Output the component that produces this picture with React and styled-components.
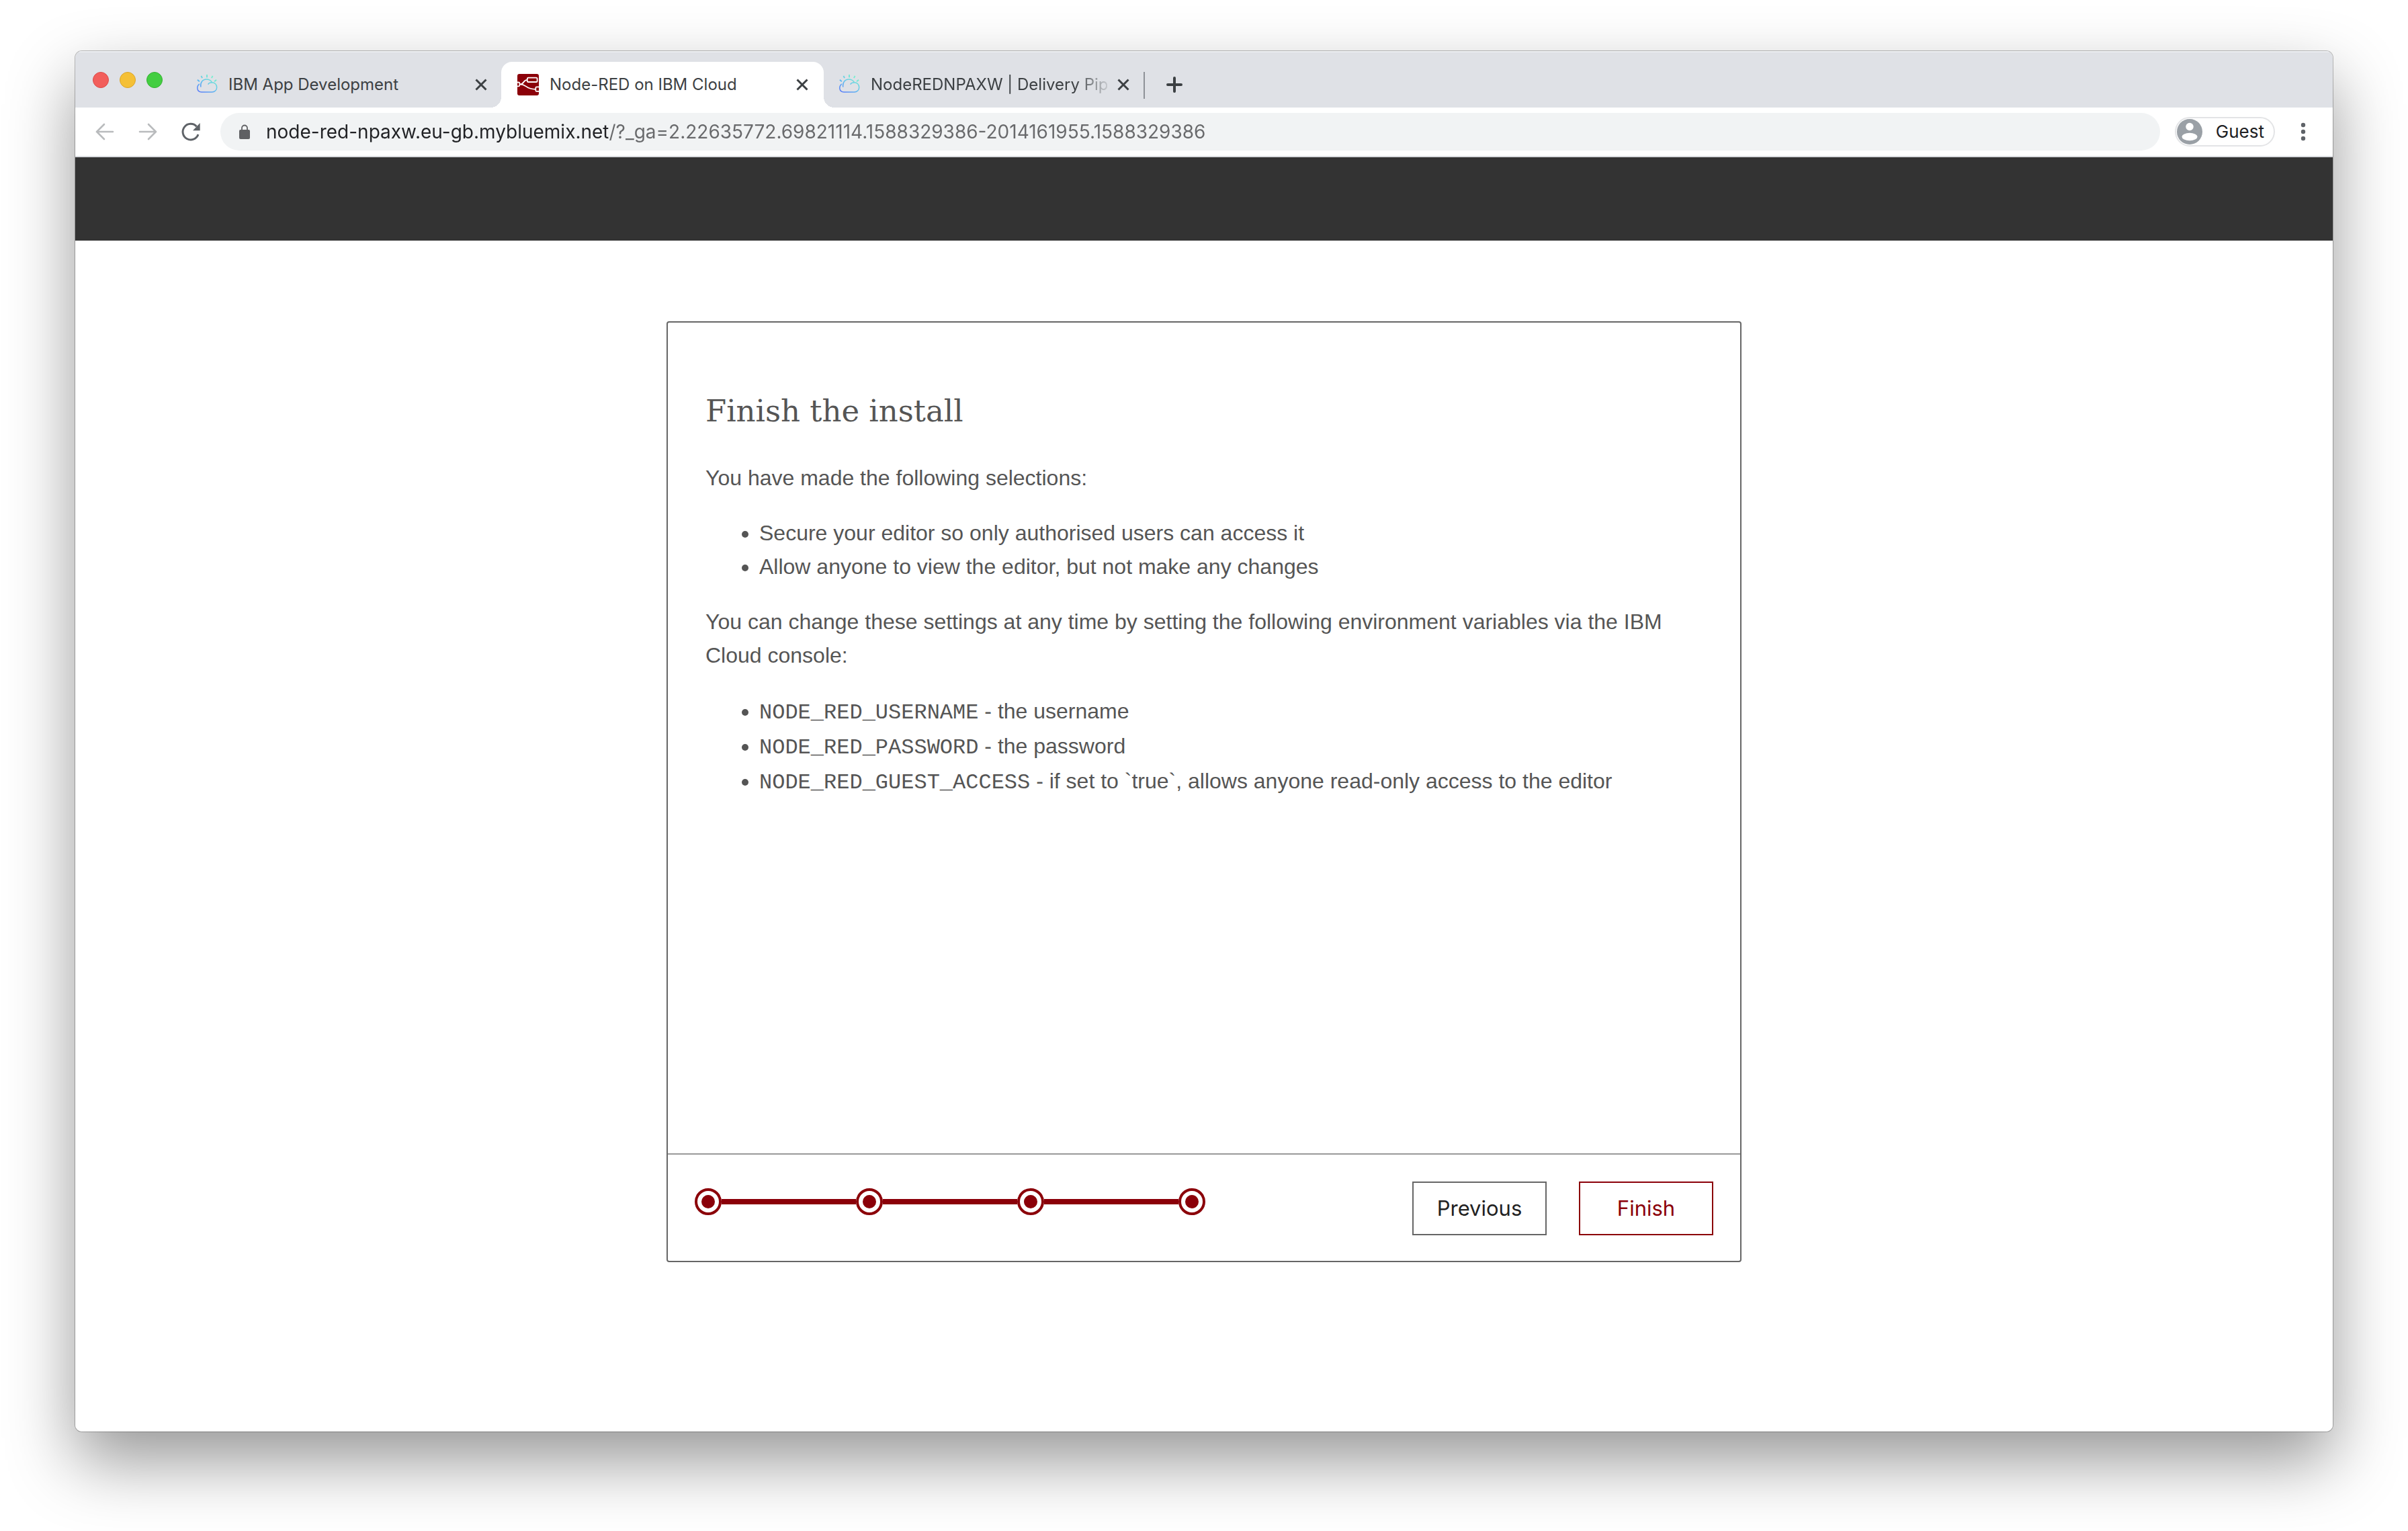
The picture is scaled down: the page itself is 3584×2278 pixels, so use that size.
import React from "react";
import styled, { createGlobalStyle, css } from "styled-components";

const sans = '"Inter", "Roboto", sans-serif';
const body = '"Liberation Sans", Arial, sans-serif';
const mono = '"Liberation Mono", "Courier New", monospace';
const slab = '"DejaVu Serif", serif';
const red = "#8b0009";

const GlobalStyle = createGlobalStyle`
  *, *::before, *::after { box-sizing: border-box; }
  body { margin: 0; background: #fff; }
  button, input { font: inherit; color: inherit; margin: 0; padding: 0; border: 0; background: none; }
  h1, p, ul, ol { margin: 0; padding: 0; }
`;

const Desktop = styled.div`
  display: flex;
  min-height: 100vh;
  padding: 76px 112px 148px;
`;

const Window = styled.div`
  flex: 1;
  min-width: 0;
  display: flex;
  flex-direction: column;
  overflow: hidden;
  border-radius: 10px;
  background: #fff;
  font-family: ${sans};
  box-shadow: 0 0 0 1px rgba(0, 0, 0, 0.25), 0 44px 100px rgba(0, 0, 0, 0.41);
`;

const TabStrip = styled.header`
  display: flex;
  height: 84px;
  padding: 16px 24px 0 26px;
  background: #dfe1e6;
  box-shadow: inset 0 2px 0 #eceef1;
`;

const Lights = styled.div`
  display: flex;
  gap: 16px;
  width: 130px;
  padding-top: 15px;
`;

const Light = styled.button`
  width: 24px;
  height: 24px;
  border-radius: 50%;
  background: ${(p) => p.$fill};
  border: 1px solid ${(p) => p.$edge};
`;

const TabList = styled.div`
  display: flex;
`;

const Tab = styled.div`
  position: relative;
  display: flex;
  align-items: center;
  width: 478px;
  padding: 0 14px 0 24px;
  font-size: 24px;
  line-height: 32px;
  color: #3c4043;
  ${(p) =>
    p.$active &&
    css`
      width: 480px;
      margin-right: -2px;
      padding-right: 16px;
      background: #fff;
      border-radius: 16px 16px 0 0;
      &::before,
      &::after {
        content: "";
        position: absolute;
        bottom: 0;
        width: 16px;
        height: 16px;
      }
      &::before {
        left: -16px;
        background: radial-gradient(circle at 0 0, transparent 16px, #fff 16px);
      }
      &::after {
        right: -16px;
        background: radial-gradient(circle at 100% 0, transparent 16px, #fff 16px);
      }
    `}
`;

const TabTitle = styled.button`
  flex: 1;
  min-width: 0;
  display: flex;
  align-items: center;
  gap: 16px;
  white-space: nowrap;
  text-align: left;
  svg { flex: none; }
  ${(p) =>
    p.$fade &&
    css`
      mask-image: linear-gradient(to left, rgba(0, 0, 0, 0.15), #000 48px);
    `}
`;

const IconButton = styled.button`
  display: grid;
  place-items: center;
  flex: none;
  width: ${(p) => p.$size || 32}px;
  height: ${(p) => p.$size || 32}px;
  color: ${(p) => p.$color || "#3c4043"};
  svg { display: block; }
`;

const CloseButton = styled(IconButton)`
  margin-left: 8px;
`;

const Divider = styled.span`
  width: 2px;
  height: 40px;
  margin-top: 15px;
  background: #8e9197;
`;

const NewTab = styled(IconButton)`
  margin: 14px 0 0 24px;
`;

const Toolbar = styled.div`
  display: flex;
  align-items: center;
  height: 74px;
  padding: 0 22px;
  border-bottom: 2px solid #dadce0;
  background: #fff;
`;

const NavButtons = styled.nav`
  display: flex;
  gap: 20px;
  margin-right: 22px;
`;

const AddressBar = styled.label`
  flex: 1;
  display: flex;
  align-items: center;
  gap: 24px;
  height: 56px;
  padding: 0 28px;
  border-radius: 28px;
  background: #f1f3f4;
  svg { flex: none; }
`;

const AddressInput = styled.input`
  && {
    flex: 1;
    min-width: 0;
    height: 40px;
    outline: none;
    font-size: 28px;
    line-height: 40px;
    background: linear-gradient(90deg, #202124 509px, #68696b 509px);
    background-clip: text;
    -webkit-text-fill-color: transparent;
  }
`;

const Profile = styled.button`
  && {
    display: flex;
    align-items: center;
    gap: 20px;
    height: 44px;
    margin: 0 20px 0 22px;
    padding: 0 14px 0 1px;
    border: 2px solid #e3e4e6;
    border-radius: 22px;
    font-size: 26px;
    line-height: 32px;
    color: #202124;
  }
`;

const Banner = styled.div`
  height: 124px;
  background: #333;
`;

const Page = styled.main`
  flex: 1;
  padding: 120px 40px;
  background: #fff;
`;

const Card = styled.section`
  display: flex;
  flex-direction: column;
  max-width: 1600px;
  min-height: 1400px;
  margin: 0 auto;
  border: 2px solid #666;
  border-radius: 4px;
  font-family: ${body};
  font-size: 32px;
  line-height: 50px;
  color: #555;
`;

const CardBody = styled.div`
  flex: 1;
  padding: 100px 56px 56px;
`;

const Title = styled.h1`
  margin-bottom: 42px;
  font-family: ${slab};
  font-size: 45px;
  font-weight: 400;
  line-height: 64px;
`;

const Paragraph = styled.p`
  margin-bottom: 32px;
`;

const BulletList = styled.ul`
  && {
    margin-bottom: 32px;
    padding-left: 80px;
    line-height: ${(p) => p.$line || 50}px;
  }
`;

const Code = styled.code`
  font-family: ${mono};
  font-size: 32px;
  line-height: 32px;
`;

const CardFooter = styled.footer`
  display: flex;
  align-items: flex-start;
  justify-content: space-between;
  height: 160px;
  padding: 40px;
  border-top: 2px solid #999;
`;

const Steps = styled.ol`
  display: flex;
  align-items: center;
  list-style: none;
  && { padding-top: 10px; }
`;

const Step = styled.li`
  display: flex;
  align-items: center;
  & + &::before {
    content: "";
    width: 200px;
    height: 8px;
    background: ${red};
  }
`;

const StepDot = styled.span`
  display: grid;
  place-items: center;
  width: 40px;
  height: 40px;
  border: 4px solid ${red};
  border-radius: 50%;
  &::after {
    content: "";
    width: 20px;
    height: 20px;
    border-radius: 50%;
    background: ${red};
  }
`;

const Actions = styled.div`
  display: flex;
  gap: 48px;
`;

const ActionButton = styled.button`
  && {
    width: 200px;
    height: 80px;
    border: 2px solid ${(p) => (p.$primary ? red : "#666")};
    color: ${(p) => (p.$primary ? red : "#222")};
    font-family: ${sans};
    font-size: 31px;
    line-height: 40px;
  }
`;

const stroke = (width) => ({
  fill: "none",
  stroke: "currentColor",
  strokeWidth: width,
});

const CloseIcon = () => (
  <svg width="32" height="32" viewBox="0 0 32 32" {...stroke(3)}>
    <path d="M8.5 8.5l15 15M23.5 8.5l-15 15" />
  </svg>
);

const PlusIcon = () => (
  <svg width="32" height="32" viewBox="0 0 32 32" {...stroke(4)} strokeLinecap="round">
    <path d="M16 6v20M6 16h20" />
  </svg>
);

const CloudIcon = ({ id }) => (
  <svg width="32" height="32" viewBox="0 0 32 32" fill="none" stroke={`url(#${id})`} strokeWidth="1.5">
    <defs>
      <linearGradient id={id} gradientUnits="userSpaceOnUse" x1="6" y1="28" x2="22" y2="3">
        <stop offset="0" stopColor="#5a7cf8" />
        <stop offset="0.5" stopColor="#5fbdf0" />
        <stop offset="1" stopColor="#78f0cf" />
      </linearGradient>
    </defs>
    <path d="M6.800 19.500C5.800 13 9.500 8 15.200 8c3.800 0 6.500 1.400 8.300 4.600" />
    <path d="M4.800 14.800C.2 18.400.6 26.800 8 27.100h15.500c4 0 7.200-3 7.200-7.200s-3.100-7.100-7-7.100c-3 0-5 .9-6 2.800" />
    <path d="M16 1v4.200M7.500 2.800l1.500 3.400M24.500 2.800L23 6.200M1.900 8.800l3 2.400M30.100 8.800l-3 2.400" strokeWidth="1.9" />
  </svg>
);

const NodeRedIcon = () => (
  <svg width="32" height="32" viewBox="0 0 32 32">
    <rect width="32" height="32" rx="3" fill="#8b0009" />
    <g fill="none" stroke="#fff" strokeWidth="1.800">
      <rect x="14.800" y="5.600" width="14.800" height="6.400" rx="1.600" />
      <path d="M0 12.500h1.900q1.500 0 1.500 1.500v2.800q0 1.500-1.500 1.500H0" />
      <path d="M32 19.300h-3.200q-1.500 0-1.500 1.500v3.600q0 1.500 1.500 1.500H32" />
      <path d="M3.600 15.400c7.400 0 4.400-6.600 11.200-6.600M3.600 15.400c10.800 0 8.400 7.400 23.600 7.400" />
    </g>
  </svg>
);

const ArrowIcon = ({ flip }) => (
  <svg width="44" height="44" viewBox="0 0 44 44" {...stroke(2.6)} strokeLinecap="round">
    <path d={flip ? "M10 22h24M23 11l11 11-11 11" : "M34 22H10M21 11L10 22l11 11"} />
  </svg>
);

const ReloadIcon = () => (
  <svg width="44" height="44" viewBox="0 0 44 44" {...stroke(3)}>
    <path d="M33 26a11.800 11.800 0 1 1-2.400-11.800" />
    <path d="M35.700 9v11.200H25z" fill="currentColor" stroke="none" />
  </svg>
);

const LockIcon = () => (
  <svg width="16" height="22" viewBox="0 0 16 22">
    <rect y="8" width="16" height="14" rx="2" fill="#5f6063" />
    <path d="M4 9V5.500a4 4 0 0 1 8 0V9" fill="none" stroke="#5f6063" strokeWidth="1.800" />
  </svg>
);

const AvatarIcon = () => (
  <svg width="38" height="38" viewBox="0 0 38 38">
    <circle cx="19" cy="19" r="19" fill="#9aa0a6" />
    <circle cx="19" cy="11.500" r="5.700" fill="#fff" />
    <ellipse cx="19" cy="26.500" rx="11.500" ry="5.700" fill="#fff" />
  </svg>
);

const MenuIcon = () => (
  <svg width="44" height="44" viewBox="0 0 44 44" fill="currentColor">
    <circle cx="22" cy="12" r="3.200" />
    <circle cx="22" cy="22" r="3.200" />
    <circle cx="22" cy="32" r="3.200" />
  </svg>
);

const tabs = [
  { title: "IBM App Development", icon: <CloudIcon id="cloud-a" /> },
  { title: "Node-RED on IBM Cloud", icon: <NodeRedIcon />, active: true },
  { title: "NodeREDNPAXW | Delivery Pip", icon: <CloudIcon id="cloud-b" />, fade: true },
];

const variables = [
  ["NODE_RED_USERNAME", "the username"],
  ["NODE_RED_PASSWORD", "the password"],
  ["NODE_RED_GUEST_ACCESS", "if set to `true`, allows anyone read-only access to the editor"],
];

export default function App() {
  return (
    <>
      <GlobalStyle />
      <Desktop>
        <Window>
          <TabStrip>
            <Lights>
              <Light $fill="#f25e5b" $edge="#dc4b4a" aria-label="Close window" />
              <Light $fill="#f5c036" $edge="#dba52a" aria-label="Minimise window" />
              <Light $fill="#43ce41" $edge="#35b132" aria-label="Zoom window" />
            </Lights>
            <TabList>
              {tabs.map((tab) => (
                <Tab key={tab.title} $active={tab.active}>
                  <TabTitle $fade={tab.fade}>
                    {tab.icon}
                    <span>{tab.title}</span>
                  </TabTitle>
                  <CloseButton aria-label={`Close ${tab.title}`}>
                    <CloseIcon />
                  </CloseButton>
                </Tab>
              ))}
            </TabList>
            <Divider />
            <NewTab $size={40} aria-label="New tab">
              <PlusIcon />
            </NewTab>
          </TabStrip>

          <Toolbar>
            <NavButtons>
              <IconButton $size={44} $color="#b9bbbd" aria-label="Back">
                <ArrowIcon />
              </IconButton>
              <IconButton $size={44} $color="#b9bbbd" aria-label="Forward">
                <ArrowIcon flip />
              </IconButton>
              <IconButton $size={44} $color="#5f6368" aria-label="Reload">
                <ReloadIcon />
              </IconButton>
            </NavButtons>
            <AddressBar>
              <LockIcon />
              <AddressInput
                aria-label="Address"
                defaultValue="node-red-npaxw.eu-gb.mybluemix.net/?_ga=2.22635772.69821114.1588329386-2014161955.1588329386"
              />
            </AddressBar>
            <Profile>
              <AvatarIcon />
              Guest
            </Profile>
            <IconButton $size={44} $color="#5f6368" aria-label="Menu">
              <MenuIcon />
            </IconButton>
          </Toolbar>

          <Banner />

          <Page>
            <Card>
              <CardBody>
                <Title>Finish the install</Title>
                <Paragraph>You have made the following selections:</Paragraph>
                <BulletList>
                  <li>Secure your editor so only authorised users can access it</li>
                  <li>Allow anyone to view the editor, but not make any changes</li>
                </BulletList>
                <Paragraph>
                  You can change these settings at any time by setting the following environment
                  variables via the IBM Cloud console:
                </Paragraph>
                <BulletList $line={52}>
                  {variables.map(([name, text]) => (
                    <li key={name}>
                      <Code>{name}</Code> - {text}
                    </li>
                  ))}
                </BulletList>
              </CardBody>
              <CardFooter>
                <Steps aria-label="Progress">
                  {[1, 2, 3, 4].map((n) => (
                    <Step key={n}>
                      <StepDot />
                    </Step>
                  ))}
                </Steps>
                <Actions>
                  <ActionButton>Previous</ActionButton>
                  <ActionButton $primary>Finish</ActionButton>
                </Actions>
              </CardFooter>
            </Card>
          </Page>
        </Window>
      </Desktop>
    </>
  );
}
